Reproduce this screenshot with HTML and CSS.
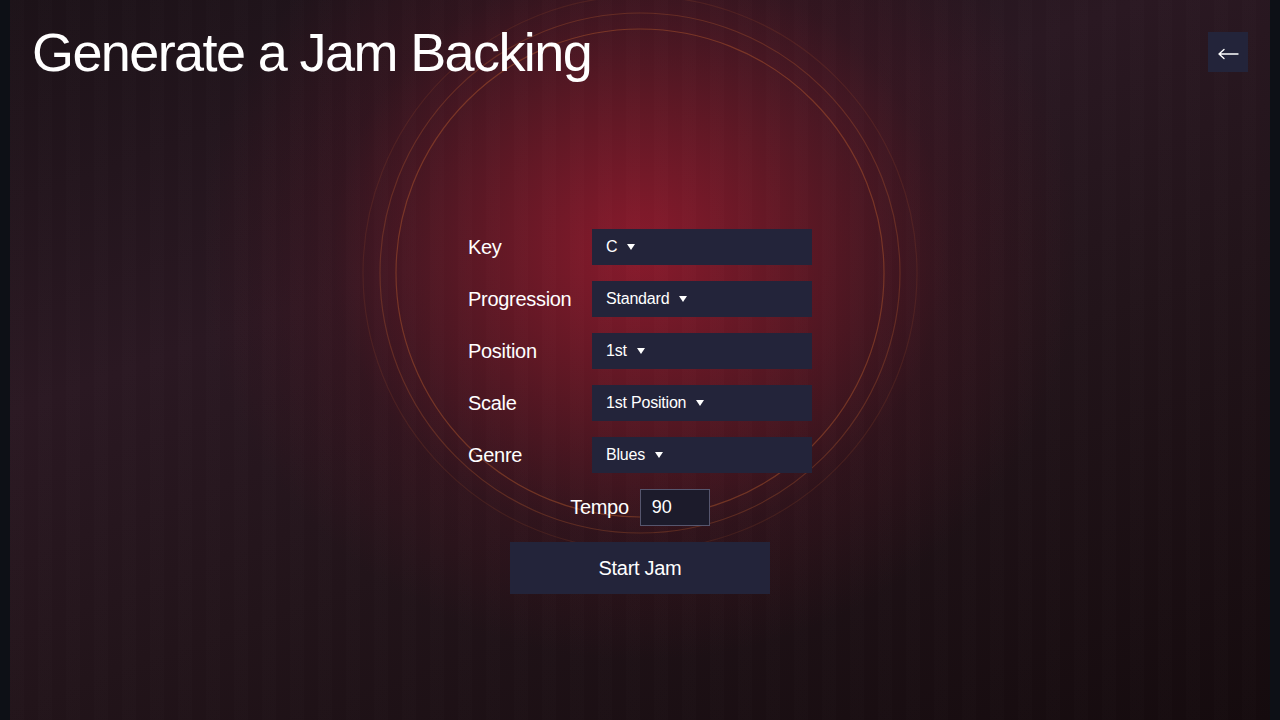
FILE: index.html
```html
<!DOCTYPE html>
<html>
<head>
    <title>Jam Backing</title>
    <meta charset="utf-8">
    <link rel="stylesheet" href="styles.css">
</head>
<body>
<div class="panel">
    <!-- anneaux décoratifs derrière le formulaire -->
    <svg class="rings" width="1260" height="720" viewBox="0 0 1260 720">
        <circle cx="630" cy="273" r="244" fill="none" stroke="rgba(190,95,45,0.42)" stroke-width="1.2"/>
        <circle cx="630" cy="273" r="260" fill="none" stroke="rgba(190,95,45,0.3)" stroke-width="1.2"/>
        <circle cx="630" cy="273" r="277" fill="none" stroke="rgba(190,95,45,0.15)" stroke-width="1.2"/>
    </svg>

    <div class="header">
        <h1>Generate a Jam Backing</h1>
        <button class="back-btn" type="button" aria-label="Back">
            <svg width="40" height="40" viewBox="0 0 40 40">
                <path d="M11 22 H30 M11 22 L16 17.5 M11 22 L16 26.5" fill="none" stroke="#ffffff" stroke-width="1.4" stroke-linecap="round" stroke-linejoin="round"/>
            </svg>
        </button>
    </div>

    <form class="jam-form">
        <div class="form-grid">
            <label>Key</label>
            <div class="dropdown">C <span class="caret"></span></div>

            <label>Progression</label>
            <div class="dropdown">Standard <span class="caret"></span></div>

            <label>Position</label>
            <div class="dropdown">1st <span class="caret"></span></div>

            <label>Scale</label>
            <div class="dropdown">1st Position <span class="caret"></span></div>

            <label>Genre</label>
            <div class="dropdown">Blues <span class="caret"></span></div>
        </div>

        <div class="tempo-row">
            <label for="tempo">Tempo</label>
            <input type="text" id="tempo" value="90">
        </div>

        <button type="button" class="start-btn">Start Jam</button>
    </form>
</div>
</body>
</html>
```

FILE: styles.css
```css
body {
    margin: 0;
    background-color: #0d1016;
    font-family: "Liberation Sans", Arial, sans-serif;
    color: #ffffff;
    overflow: hidden;
}
.panel {
    position: relative;
    margin: 0 10px;
    height: 720px;
    box-sizing: border-box;
    padding: 21px 22px 0 22px;
    background:
        repeating-linear-gradient(90deg, rgba(255,255,255,0.006) 0 14px, rgba(0,0,0,0.012) 14px 28px),
        radial-gradient(ellipse 440px 410px at 630px 250px, rgba(140,26,44,0.98) 0%, rgba(112,24,38,0.78) 35%, rgba(72,20,32,0.38) 70%, rgba(40,16,26,0) 100%),
        linear-gradient(160deg, #1c1218 0%, #2a1822 35%, #22141a 60%, #150b0e 100%);
}
.rings {
    position: absolute;
    top: 0;
    left: 0;
    pointer-events: none;
}
.header {
    position: relative;
    display: flex;
    justify-content: space-between;
    align-items: center;
}
h1 {
    margin: 0;
    font-size: 54px;
    font-weight: normal;
    letter-spacing: -1.6px;
    line-height: normal;
}
.back-btn {
    width: 40px;
    height: 40px;
    border: none;
    background-color: #23243a;
    padding: 0;
    cursor: pointer;
}
.back-btn svg {
    display: block;
}
.jam-form {
    position: relative;
    margin-top: 146px;
    display: flex;
    flex-direction: column;
    align-items: center;
    gap: 16px;
}
.form-grid {
    display: grid;
    grid-template-columns: 124px 220px;
    row-gap: 16px;
    align-items: center;
}
.form-grid label, .tempo-row label {
    font-size: 20px;
    letter-spacing: -0.3px;
}
.dropdown {
    height: 36px;
    box-sizing: border-box;
    padding: 0 14px;
    background-color: #23243a;
    font-size: 16px;
    letter-spacing: -0.2px;
    display: flex;
    align-items: center;
    gap: 10px;
}
.caret {
    width: 0;
    height: 0;
    border-left: 4px solid transparent;
    border-right: 4px solid transparent;
    border-top: 6px solid #ffffff;
    margin-top: -1px;
}
.tempo-row {
    display: flex;
    align-items: center;
    gap: 11px;
}
.tempo-row input {
    width: 70px;
    height: 37px;
    box-sizing: border-box;
    padding: 0 11px;
    background-color: #1c1b2b;
    border: 1px solid #56566e;
    color: #ffffff;
    font-family: "Liberation Sans", Arial, sans-serif;
    font-size: 18px;
}
.start-btn {
    width: 260px;
    height: 52px;
    border: none;
    background-color: #23243a;
    color: #ffffff;
    font-family: "Liberation Sans", Arial, sans-serif;
    font-size: 20px;
    letter-spacing: -0.3px;
    cursor: pointer;
}
```
